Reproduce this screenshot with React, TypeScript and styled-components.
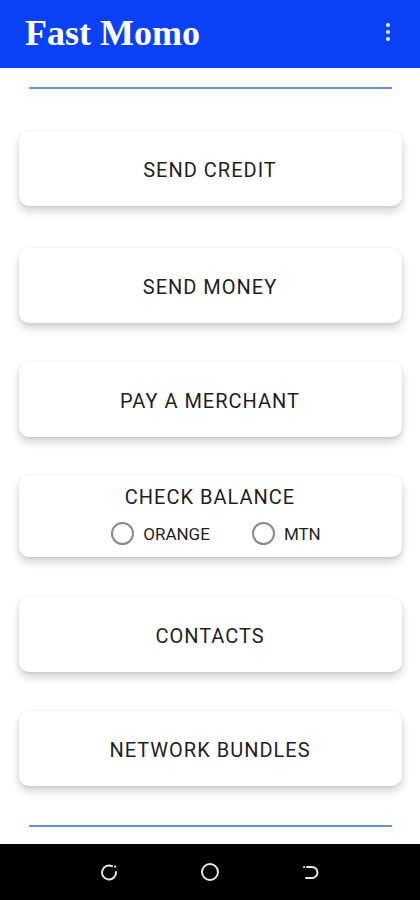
import React from "react";
import styled, { createGlobalStyle } from "styled-components";

const GlobalStyle = createGlobalStyle`
  html, body {
    margin: 0;
    padding: 0;
    background: #ffffff;
  }
  body {
    font-family: Roboto, "Liberation Sans", sans-serif;
  }
`;

const Screen = styled.div`
  width: 420px;
  height: 900px;
  display: flex;
  flex-direction: column;
  background: #ffffff;
  overflow: hidden;
`;

const AppBar = styled.header`
  height: 68px;
  flex: none;
  background: #0b41f4;
  display: flex;
  align-items: center;
  justify-content: space-between;
  padding: 0 30px 0 25px;
  box-sizing: border-box;
`;

const Title = styled.h1`
  margin: 0;
  color: #ffffff;
  font-family: "Liberation Serif", "DejaVu Serif", serif;
  font-weight: 700;
  font-size: 36px;
  line-height: 1;
  padding-bottom: 2px;
`;

const MenuButton = styled.div`
  display: flex;
  flex-direction: column;
  gap: 3px;
  padding-bottom: 4px;
`;

const Dot = styled.span`
  width: 4px;
  height: 4px;
  border-radius: 50%;
  background: #e6ecff;
`;

const Content = styled.main`
  flex: 1;
  display: flex;
  flex-direction: column;
  align-items: center;
  padding-top: 19px;
`;

const Divider = styled.hr<{ $top?: number }>`
  width: 363px;
  height: 2px;
  border: none;
  margin: ${(p) => p.$top ?? 0}px 0 0;
  background: #6d8fd6;
`;

const Card = styled.div<{ $height?: number; $gap: number }>`
  width: 383px;
  height: ${(p) => p.$height ?? 75}px;
  margin-top: ${(p) => p.$gap}px;
  padding-top: 3px;
  background: #ffffff;
  border-radius: 10px;
  box-shadow: 0 5px 10px rgba(0, 0, 0, 0.18), 0 1px 3px rgba(0, 0, 0, 0.08);
  display: flex;
  flex-direction: column;
  align-items: center;
  justify-content: center;
  box-sizing: border-box;
`;

const Label = styled.span`
  font-size: 20px;
  color: #1f1f1f;
  letter-spacing: 1px;
`;

const BalanceCard = styled(Card)`
  justify-content: flex-start;
  padding-top: 10px;
  gap: 13px;
`;

const RadioRow = styled.div`
  display: flex;
  align-items: center;
  gap: 42px;
  margin-left: 12px;
`;

const RadioOption = styled.label`
  display: flex;
  align-items: center;
  gap: 9px;
  font-size: 17px;
  color: #1f1f1f;
`;

const RadioCircle = styled.span`
  width: 19px;
  height: 19px;
  border: 2px solid #8a8a8a;
  border-radius: 50%;
`;

const NavBar = styled.nav`
  height: 56px;
  flex: none;
  background: #000000;
  display: flex;
  align-items: center;
  justify-content: space-between;
  padding: 0 98px 0 98px;
  box-sizing: border-box;
`;

const NavIcon = styled.svg`
  width: 22px;
  height: 22px;
  fill: none;
  stroke: #e8e8e8;
  stroke-width: 2;
  stroke-linecap: round;
`;

const actions = [
  { label: "SEND CREDIT", gap: 42 },
  { label: "SEND MONEY", gap: 42 },
  { label: "PAY A MERCHANT", gap: 39 },
];

const moreActions = [
  { label: "CONTACTS", gap: 40 },
  { label: "NETWORK BUNDLES", gap: 39 },
];

export default function App() {
  return (
    <>
      <GlobalStyle />
      <Screen>
        <AppBar>
          <Title>Fast Momo</Title>
          <MenuButton>
            <Dot />
            <Dot />
            <Dot />
          </MenuButton>
        </AppBar>
        <Content>
          <Divider />
          {actions.map((a) => (
            <Card key={a.label} $gap={a.gap}>
              <Label>{a.label}</Label>
            </Card>
          ))}
          <BalanceCard $gap={38} $height={82}>
            <Label>CHECK BALANCE</Label>
            <RadioRow>
              <RadioOption>
                <RadioCircle />
                ORANGE
              </RadioOption>
              <RadioOption>
                <RadioCircle />
                MTN
              </RadioOption>
            </RadioRow>
          </BalanceCard>
          {moreActions.map((a) => (
            <Card key={a.label} $gap={a.gap}>
              <Label>{a.label}</Label>
            </Card>
          ))}
          <Divider $top={39} />
        </Content>
        <NavBar>
          <NavIcon viewBox="0 0 22 22">
            <path d="M14 5.2 A7 7 0 1 0 18 11" />
            <path d="M17 5.5 L17.2 5.7" />
          </NavIcon>
          <NavIcon viewBox="0 0 22 22">
            <circle cx="11" cy="11" r="8" />
          </NavIcon>
          <NavIcon viewBox="0 0 22 22">
            <path d="M7 6 H12 A5 5 0 0 1 12 17 H6" />
            <path d="M4 6 L4.2 6" />
          </NavIcon>
        </NavBar>
      </Screen>
    </>
  );
}
